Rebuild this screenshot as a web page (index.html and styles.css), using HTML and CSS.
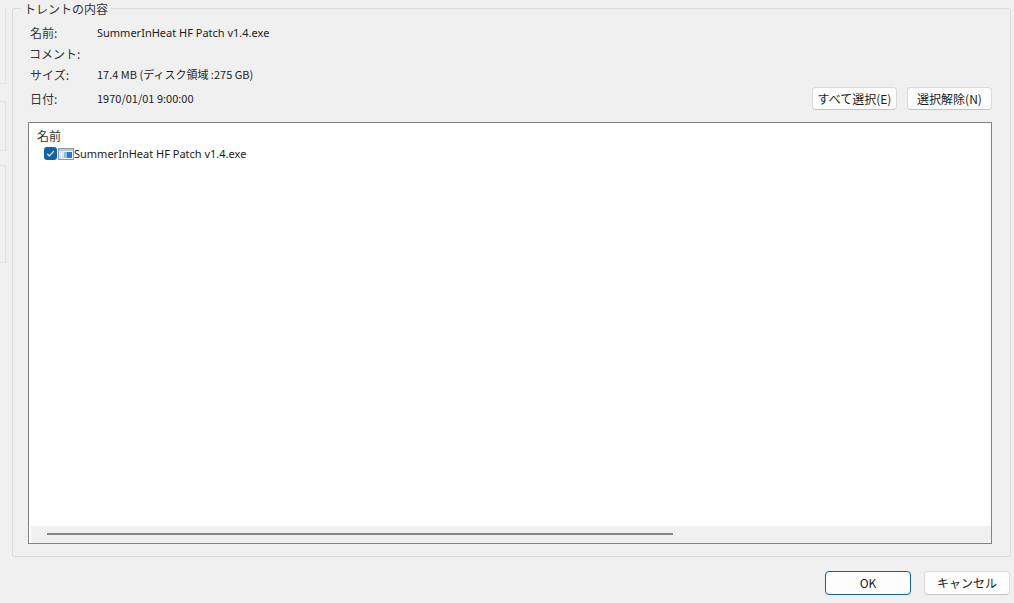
FILE: index.html
```html
<!DOCTYPE html>
<html lang="ja">
<head>
<meta charset="utf-8">
<title>トレントの内容</title>
<link rel="stylesheet" href="styles.css">
</head>
<body>
<div class="dialog">
  <div class="main">
    <div class="stubs">
      <div class="stub stub-a"></div>
      <div class="stub stub-b"></div>
      <div class="stub stub-c"></div>
    </div>
    <section class="group">
      <div class="group-title">トレントの内容</div>
      <div class="info">
        <div class="rows">
          <div class="row row-name"><span class="label">名前:</span><span class="value">SummerInHeat HF Patch v1.4.exe</span></div>
          <div class="row row-comment"><span class="label">コメント:</span><span class="value"></span></div>
          <div class="row row-size"><span class="label">サイズ:</span><span class="value">17.4 MB (ディスク領域 :275 GB)</span></div>
          <div class="row row-date"><span class="label">日付:</span><span class="value">1970/01/01 9:00:00</span></div>
        </div>
        <div class="actions">
          <button class="btn" type="button">すべて選択(E)</button>
          <button class="btn" type="button">選択解除(N)</button>
        </div>
      </div>
      <div class="list">
        <div class="list-body">
          <div class="list-head">名前</div>
          <div class="item">
            <span class="check">
              <svg width="11" height="11" viewBox="0 0 11 11"><path d="M2.2 5.8 4.4 8 8.8 3.2" fill="none" stroke="#fff" stroke-width="1.2"/></svg>
            </span>
            <svg class="file-icon" width="16" height="12" viewBox="0 0 16 12">
              <rect x=".5" y=".5" width="15" height="11" fill="#f4f7fb" stroke="#8b98a8"/>
              <rect x="1" y="1" width="14" height="2" fill="#b9c9dc"/>
              <rect x="2" y="4" width="3" height="6" fill="#fff" stroke="#9fb0c4" stroke-width=".5"/>
              <rect x="6" y="4" width="8" height="6" fill="#2f78c4"/>
              <rect x="6" y="4" width="3" height="6" fill="#8fbbe6"/>
            </svg>
            <span class="item-name">SummerInHeat HF Patch v1.4.exe</span>
          </div>
        </div>
        <div class="scrollbar"><div class="thumb"></div></div>
      </div>
    </section>
  </div>
  <div class="footer">
    <button class="btn btn-foot btn-default" type="button">OK</button>
    <button class="btn btn-foot" type="button">キャンセル</button>
  </div>
</div>
</body>
</html>
```
FILE: styles.css
```css
* { box-sizing: border-box; }
html, body { margin: 0; padding: 0; }
body {
  width: 1014px;
  height: 603px;
  overflow: hidden;
  background: #f0f0f0;
  color: #1c1c1c;
  font-family: "Noto Sans CJK JP", "Noto Sans", sans-serif;
  font-size: 12px;
}
.dialog { display: flex; flex-direction: column; height: 603px; }
.main { display: flex; height: 557px; padding-top: 8px; }
.stubs { width: 12px; display: flex; flex-direction: column; }
.stub { width: 6px; border: 1px solid #e3e3e3; border-left: 0; }
.stub-a { height: 76px; border-top: 0; margin-top: 0; }
.stub-b { height: 50px; margin-top: 17px; }
.stub-c { height: 98px; margin-top: 14px; }
.group {
  position: relative;
  width: 999px;
  border: 1px solid #dcdcdc;
  border-radius: 2px;
  padding: 0 18px 12px 15px;
  display: flex;
  flex-direction: column;
}
.group-title {
  position: absolute;
  left: 8px;
  top: -9px;
  padding: 0 3px 0 3px;
  background: #f0f0f0;
  line-height: 17px;
  color: #333;
}
.info { display: flex; height: 113px; }
.rows { flex: 1; padding-top: 13px; }
.row { display: flex; align-items: center; height: 20px; }
.row-comment { margin-top: 1px; }
.row-size { margin-top: 1px; }
.row-date { margin-top: 4px; }
.label { width: 69px; padding-left: 2px; color: #333; white-space: nowrap; }
.row-comment .label { padding-left: 1px; }
.value { font-family: "Noto Sans", "Noto Sans CJK JP", sans-serif; font-size: 11px; white-space: nowrap; }
.row-size .value, .row-date .value { font-family: "Noto Sans CJK JP", sans-serif; font-size: 11px; }
.actions { display: flex; gap: 10px; align-items: flex-start; padding-top: 78px; }
.btn {
  width: 85px;
  height: 23px;
  padding: 0;
  background: #fdfdfd;
  border: 1px solid #dadada;
  border-bottom-color: #c4c4c4;
  border-radius: 4px;
  color: #1c1c1c;
  font: inherit;
  font-size: 12px;
  line-height: 20px;
}
.list {
  width: 964px;
  height: 423px;
  border: 1px solid #828282;
  background: #fff;
  display: flex;
  flex-direction: column;
}
.list-body { flex: 1; padding: 4px 0 0 8px; }
.list-head { height: 17px; line-height: 17px; color: #333; }
.item { display: flex; align-items: center; height: 20px; padding-left: 7px; margin-top: 0; }
.check {
  width: 13px;
  height: 13px;
  background: #0f62ad;
  border-radius: 3px;
  display: flex;
  align-items: center;
  justify-content: center;
  margin-right: 1px;
}
.check svg { display: block; }
.file-icon { display: block; flex: none; }
.item-name { font-family: "Noto Sans", sans-serif; font-size: 11px; color: #1c1c1c; }
.scrollbar {
  height: 17px;
  margin: 0 0 0 2px;
  background: #f0f0f0;
  padding: 7px 0 0 16px;
}
.thumb { width: 626px; height: 2px; background: #858585; }
.footer { flex: 1; display: flex; justify-content: flex-end; gap: 13px; padding: 14px 4px 0 0; }
.btn-foot { height: 24px; width: 86px; }
.btn-default { border: 1px solid #0f62ad; background: #fdfdfd; }
```
